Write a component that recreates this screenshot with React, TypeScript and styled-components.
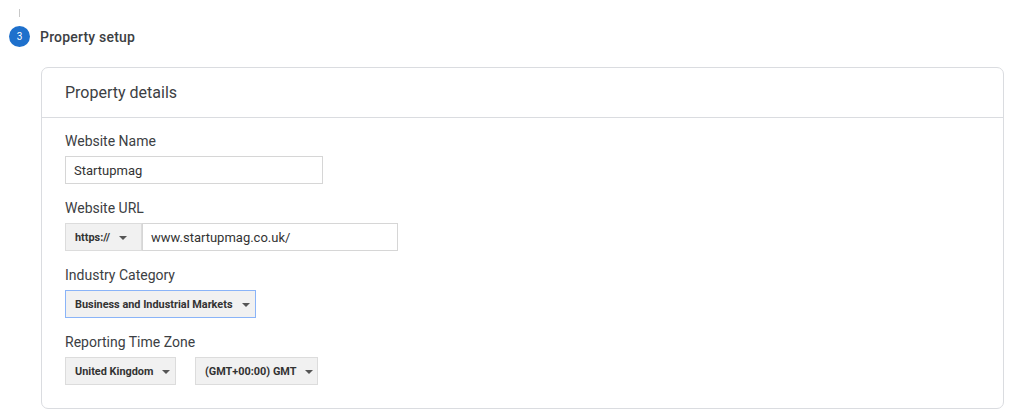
import * as React from "react";
import styled, { createGlobalStyle } from "styled-components";

const GlobalStyle = createGlobalStyle`
  html, body {
    margin: 0;
    padding: 0;
    background: #ffffff;
    font-family: Roboto, "Liberation Sans", Arial, sans-serif;
    color: #3c4043;
  }
`;

const Page = styled.div`
  width: 1024px;
  height: 414px;
  overflow: hidden;
  padding: 9px 20px 0 9px;
  box-sizing: border-box;
`;

const StepLine = styled.div`
  width: 1px;
  height: 8px;
  margin-left: 10px;
  background: #c8c8c8;
`;

const StepHead = styled.div`
  display: flex;
  align-items: center;
  gap: 10px;
  margin-top: 9px;
  height: 21px;
`;

const StepBadge = styled.div`
  width: 21px;
  height: 21px;
  border-radius: 50%;
  background: #1e70cc;
  color: #ffffff;
  font-size: 10px;
  display: flex;
  align-items: center;
  justify-content: center;
`;

const StepTitle = styled.div`
  font-size: 14px;
  font-weight: 500;
  color: #3c4043;
  letter-spacing: 0.2px;
`;

const Card = styled.section`
  margin: 20px 0 0 32px;
  width: 963px;
  height: 342px;
  box-sizing: border-box;
  border: 1px solid #dadce0;
  border-radius: 7px;
`;

const CardHeader = styled.div`
  height: 50px;
  box-sizing: border-box;
  border-bottom: 1px solid #dadce0;
  padding: 0 23px;
  display: flex;
  align-items: center;
  font-size: 16px;
  color: #3c4043;
`;

const CardBody = styled.div`
  padding: 14px 23px 0;
  display: flex;
  flex-direction: column;
`;

const Field = styled.div`
  display: flex;
  flex-direction: column;
  margin-bottom: 15px;
`;

const Label = styled.label`
  font-size: 14px;
  line-height: 18px;
  color: #3c4043;
  margin-bottom: 6px;
`;

const Row = styled.div<{ $gap?: number }>`
  display: flex;
  gap: ${p => p.$gap ?? 0}px;
`;

const TextInput = styled.div<{ $width: number }>`
  width: ${p => p.$width}px;
  height: 28px;
  box-sizing: border-box;
  border: 1px solid #d6d6d6;
  background: #ffffff;
  display: flex;
  align-items: center;
  padding: 0 8px;
  font-size: 13px;
  color: #333333;
`;

const Select = styled.div<{ $width: number; $focused?: boolean }>`
  width: ${p => p.$width}px;
  height: 28px;
  box-sizing: border-box;
  border: 1px solid ${p => (p.$focused ? "#8ab4f8" : "#dcdcdc")};
  background: #f1f1f1;
  display: flex;
  align-items: center;
  gap: 9px;
  padding: 0 9px;
  font-size: 10.9px;
  font-weight: 700;
  color: #333333;
  white-space: nowrap;
`;

const Caret = styled.span`
  flex: none;
  width: 0;
  height: 0;
  border-left: 4px solid transparent;
  border-right: 4px solid transparent;
  border-top: 4px solid #555555;
  margin-top: 1px;
`;

function Dropdown({
  value,
  width,
  focused,
}: {
  value: string;
  width: number;
  focused?: boolean;
}) {
  return (
    <Select $width={width} $focused={focused}>
      <span>{value}</span>
      <Caret />
    </Select>
  );
}

export default function App() {
  return (
    <Page>
      <GlobalStyle />
      <StepLine />
      <StepHead>
        <StepBadge>3</StepBadge>
        <StepTitle>Property setup</StepTitle>
      </StepHead>
      <Card>
        <CardHeader>Property details</CardHeader>
        <CardBody>
          <Field>
            <Label>Website Name</Label>
            <TextInput $width={258}>Startupmag</TextInput>
          </Field>
          <Field>
            <Label>Website URL</Label>
            <Row>
              <Dropdown value="https://" width={77} />
              <TextInput $width={256}>www.startupmag.co.uk/</TextInput>
            </Row>
          </Field>
          <Field>
            <Label>Industry Category</Label>
            <Dropdown value="Business and Industrial Markets" width={191} focused />
          </Field>
          <Field>
            <Label>Reporting Time Zone</Label>
            <Row $gap={19}>
              <Dropdown value="United Kingdom" width={111} />
              <Dropdown value="(GMT+00:00) GMT" width={123} />
            </Row>
          </Field>
        </CardBody>
      </Card>
    </Page>
  );
}
